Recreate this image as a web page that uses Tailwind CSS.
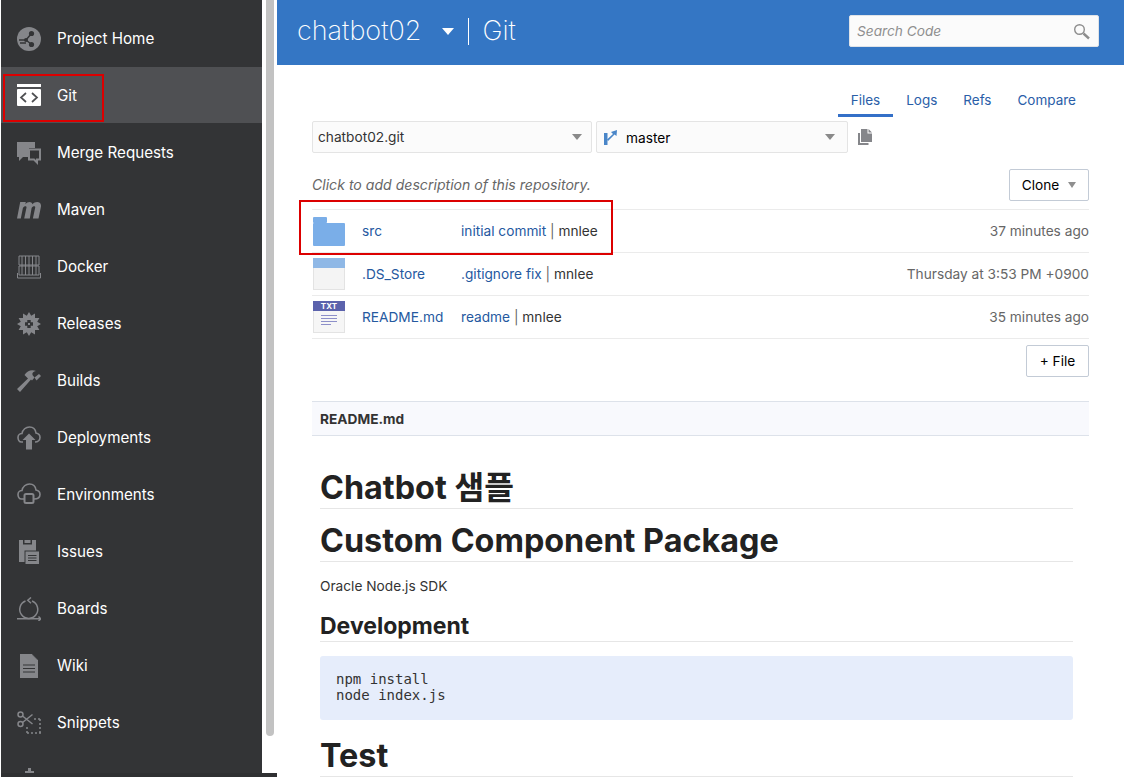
<!DOCTYPE html>
<html lang="en">
<head>
    <meta charset="UTF-8">
    <title>chatbot02 | Git</title>
    <script src="https://cdn.jsdelivr.net/npm/@tailwindcss/browser@4"></script>
</head>
<body class="bg-white">
    <div class="relative w-[1126px] h-[777px] overflow-hidden flex font-['Inter','Noto_Sans_CJK_KR',sans-serif] bg-white">

        <!-- sidebar -->
        <div class="w-[276px] ml-px h-full shrink-0 flex items-start bg-[#2f3032]">
            <div class="w-[261px] h-[773px] bg-[#333436] overflow-hidden text-[15.2px] text-white shrink-0">
                <div class="h-[9px]"></div>
                <a class="flex items-center h-[57px] pl-[16px] pt-[3px]">
                    <svg class="w-6 h-6 mr-4" viewBox="0 0 24 24"><circle cx="12" cy="12" r="12" fill="#85868a"/><path d="M2 13h7l5-6M9 13l5 4M3 16h6" stroke="#333436" stroke-width="1.4" fill="none"/><circle cx="14.500" cy="6.500" r="2.600" fill="#333436"/><circle cx="14.500" cy="17.500" r="2.600" fill="#333436"/><circle cx="9" cy="13" r="2" fill="#333436"/></svg>
                    <span>Project Home</span>
                </a>
                <a class="flex items-center h-[57px] pl-[16px] pt-[2px] bg-[#4f5053] border-t border-[#333436]">
                    <svg class="w-6 h-6 mr-4" viewBox="0 0 24 24"><rect y="0" width="24" height="3" fill="#fff"/><rect y="5" width="24" height="17" rx="1" fill="#fff"/><path d="M9 9l-5 4.500 5 4.500M15 9l5 4.500-5 4.500" stroke="#4f5053" stroke-width="1.700" fill="none"/></svg>
                    <span>Git</span>
                </a>
                <a class="flex items-center h-[57px] pl-[16px] pt-[3px]">
                    <svg class="w-6 h-6 mr-4" viewBox="0 0 24 24"><path d="M0 1h18v6h-6v9H6l-4 4v-4H0z" fill="#85868a"/><path d="M12 8.500h11v10h-3v3l-3-3h-5z" fill="#333436" stroke="#85868a" stroke-width="2"/></svg>
                    <span>Merge Requests</span>
                </a>
                <a class="flex items-center h-[57px] pl-[16px] pt-[3px]">
                    <svg class="w-6 h-6 mr-4" viewBox="0 0 24 24"><path d="M0 20.500L3.200 4h5.600l-.4 2.200C10.500 3.500 14.500 3 15.500 6.200 18 3 24.500 2.800 24 8.500L21.500 20.500h-5.600l2.300-11c.2-2-2.600-1.500-3.600.5L12.800 20.500H7.200l2.300-11c.2-2-2.600-1.500-3.600.5L3.800 20.500z" fill="#85868a"/></svg>
                    <span>Maven</span>
                </a>
                <a class="flex items-center h-[57px] pl-[16px] pt-[3px]">
                    <svg class="w-6 h-6 mr-4" viewBox="0 0 24 24" fill="none" stroke="#85868a" stroke-width="1"><path d="M2 1h20v9H2zM2 11h20v9H2zM.5 18v5h23v-5M12 1v19M5 1v19M8.500 1v19M15.500 1v19M19 1v19"/></svg>
                    <span>Docker</span>
                </a>
                <a class="flex items-center h-[57px] pl-[16px] pt-[3px]">
                    <svg class="w-6 h-6 mr-4" viewBox="0 0 24 24">
                        <polygon fill="#85868a" points="12,0 14.200,3.800 18,1.600 18,6 22.400,6 20.200,9.800 24,12 20.200,14.200 22.400,18 18,18 18,22.400 14.200,20.200 12,24 9.800,20.200 6,22.400 6,18 1.600,18 3.800,14.200 0,12 3.800,9.800 1.600,6 6,6 6,1.600 9.800,3.800"/>
                        <path d="M12 8v8M8 12h8" stroke="#333436" stroke-width="3.400"/>
                        <rect x="11" y="11" width="2" height="2" fill="#85868a"/>
                    </svg>
                    <span>Releases</span>
                </a>
                <a class="flex items-center h-[57px] pl-[16px] pt-[3px]">
                    <svg class="w-6 h-6 mr-4" viewBox="0 0 24 24" fill="#85868a"><path d="M0 20L11 9.500 7.500 6C10 1.500 15 0 19 2c-3 .5-4 2-3.500 4l2 2.500L15 11.500l-1-1L3 23z"/><path d="M17.500 8.500L22 5l2 2-4.500 4.500z"/></svg>
                    <span>Builds</span>
                </a>
                <a class="flex items-center h-[57px] pl-[16px] pt-[3px]">
                    <svg class="w-6 h-6 mr-4" viewBox="0 0 24 24"><path d="M6 16H4.500C2 16 1 13.500 1 11.500 1 9 3 7.500 5 7.500 5.500 3.500 9 1 12.500 1 16 1 18.500 3.500 19 7 21.500 7.500 23 9.500 23 11.500 23 14 21 16 18 16" fill="none" stroke="#85868a" stroke-width="1.600"/><path d="M12 7.500l6.500 6.500H15v9.500H9V14H5.500z" fill="#85868a"/></svg>
                    <span>Deployments</span>
                </a>
                <a class="flex items-center h-[57px] pl-[16px] pt-[3px]">
                    <svg class="w-6 h-6 mr-4" viewBox="0 0 24 24" fill="none" stroke="#85868a" stroke-width="1.600"><path d="M7 16H4.500C2 16 1 13.500 1 11.500 1 9 3 7.500 5 7.500 5.500 3.500 9 1 12.500 1 16 1 18.500 3.500 19 7 21.500 7.500 23 9.500 23 11.500 23 14 21 16 17 16"/><rect x="7.500" y="11" width="9" height="9" rx="1.500" stroke-width="2"/></svg>
                    <span>Environments</span>
                </a>
                <a class="flex items-center h-[57px] pl-[16px] pt-[3px]">
                    <svg class="w-6 h-6 mr-4" viewBox="0 0 24 24"><path d="M2 0h17v10.500H7.500V22H2z" fill="#85868a"/><rect x="6" y="0" width="9" height="4.500" fill="#333436"/><rect x="7.500" y="0" width="6" height="3" fill="#85868a"/><path d="M8.500 11.500H22V24H8.500z" fill="#85868a"/><path d="M11 15.500h8.500M11 18h8.500M11 20.500h8.500" stroke="#333436" stroke-width="1"/></svg>
                    <span>Issues</span>
                </a>
                <a class="flex items-center h-[57px] pl-[16px] pt-[3px]">
                    <svg class="w-6 h-6 mr-4" viewBox="0 0 24 24" fill="none" stroke="#85868a" stroke-width="1.500"><path d="M8.500 4A9 9 0 1 0 15 4"/><path d="M14 .5L10.800 3.300 14 6.200"/><path d="M0 21.800h23.500M21.500 19.500l2.300 2.300-2.300 2.200"/></svg>
                    <span>Boards</span>
                </a>
                <a class="flex items-center h-[57px] pl-[16px] pt-[3px]">
                    <svg class="w-6 h-6 mr-4" viewBox="0 0 24 24"><path d="M3 0h12l6 6v18H3z" fill="#85868a"/><path d="M15 0v6h6" fill="#333436"/><path d="M15 .5v5.500h5.500z" fill="#85868a"/><path d="M6 11h12M6 14.500h12M6 18h12" stroke="#333436" stroke-width="1"/></svg>
                    <span>Wiki</span>
                </a>
                <a class="flex items-center h-[57px] pl-[16px] pt-[3px]">
                    <svg class="w-6 h-6 mr-4" viewBox="0 0 24 24" fill="none" stroke="#85868a" stroke-width="1.500"><circle cx="3.500" cy="3.500" r="2.500"/><circle cx="3.500" cy="13" r="2.500"/><path d="M5.500 5l10 8M5.500 11.500l10-8"/><path d="M17 8h7M23 8v14M10 22h14M10 16v6" stroke-dasharray="2 2"/></svg>
                    <span>Snippets</span>
                </a>
                <a class="flex items-center h-[57px] pl-[16px] pt-[3px]">
                    <svg class="w-6 h-6 mr-4" viewBox="0 0 24 24"><path d="M2 6h6V3h3v-3h3v3h3v3h5v16H2z" fill="#85868a"/></svg>
                    <span>Project Administration</span>
                </a>
            </div>
            <!-- scrollbar -->
            <div class="flex-1 h-[773px] bg-white pl-[4px]">
                <div class="w-[8px] h-[736px] rounded-b-[4px] bg-[#c2c2c2]"></div>
            </div>
        </div>

        <!-- main -->
        <div class="w-[847px] shrink-0 h-full flex flex-col text-[13.7px] text-[#333]">
            <div class="h-[65px] bg-[#3476c4] flex items-center justify-between pl-[20px] pr-[25px] text-white shrink-0">
                <div class="flex items-center font-extralight text-[27px] mb-[2px]">
                    <span>chatbot02</span>
                    <span class="ml-[21px] w-0 h-0 border-x-[6px] border-x-transparent border-t-[7px] border-t-white"></span>
                    <span class="ml-[14px] w-px h-[27px] bg-white"></span>
                    <span class="ml-[13px]">Git</span>
                </div>
                <div class="w-[250px] h-[32px] mb-[3px] bg-[#fbfbfb] rounded-[2px] flex items-center justify-between pl-[7px] pr-[8px] border border-[#dfe3e8]">
                    <span class="italic text-[#8f8f8f]">Search Code</span>
                    <svg class="w-[17px] h-[17px]" viewBox="0 0 17 17" fill="none" stroke="#8d8d8d"><circle cx="6.500" cy="6.500" r="4.800" stroke-width="1.400"/><path d="M10.500 10.500l5.500 5" stroke-width="2.400"/></svg>
                </div>
            </div>

            <div class="pl-[35px] pr-[35px] flex-1 overflow-hidden">
                <!-- tabs -->
                <div class="flex justify-end pt-[25px] h-[52px] text-[#2a5ea8] text-[13.5px]">
                    <a class="h-[27px] px-[13px] border-b-[3px] border-[#3470c8]">Files</a>
                    <a class="h-[27px] px-[13px]">Logs</a>
                    <a class="h-[27px] px-[13px]">Refs</a>
                    <a class="h-[27px] px-[13px]">Compare</a>
                </div>

                <!-- repo and branch pickers -->
                <div class="flex items-center h-[32px] mt-[4px]">
                    <div class="w-[280px] h-[32px] border border-[#e4e4e4] rounded-[2px] bg-[#fbfbfb] flex items-center justify-between pl-[5px] pr-[9px]">
                        <span>chatbot02.git</span>
                        <span class="w-0 h-0 border-x-[5px] border-x-transparent border-t-[6px] border-t-[#8a8a8a]"></span>
                    </div>
                    <div class="ml-[4px] w-[252px] h-[32px] border border-[#e4e4e4] rounded-[2px] bg-[#fbfbfb] flex items-center pl-[7px] pr-[12px]">
                        <svg class="w-[13px] h-[15px] mr-[9px]" viewBox="0 0 13 15" fill="#4a86c8"><path d="M0 3h3.500v12H0z"/><path d="M3 9.500L9 4 7 2l6-2-.5 6-2-1.500L4 11z"/></svg>
                        <span class="text-black flex-1 pt-[2px]">master</span>
                        <span class="w-0 h-0 border-x-[5px] border-x-transparent border-t-[6px] border-t-[#8a8a8a]"></span>
                    </div>
                    <svg class="ml-[10px] w-[14px] h-[16px]" viewBox="0 0 14 16" fill="#85868a"><path d="M3 0h6.500v4.500H14V13H3z"/><path d="M10.500 0v3.500H14z"/><path d="M0 4h2v10h8.500v2H0z"/></svg>
                </div>

                <!-- description -->
                <div class="flex items-center justify-between mt-[16px] h-[32px]">
                    <span class="italic text-[#666] text-[14.1px]">Click to add description of this repository.</span>
                    <button class="h-[32px] w-[80px] border border-[#c3cbd6] rounded-[2px] flex items-center justify-center text-black">
                        Clone
                        <span class="ml-[9px] w-0 h-0 border-x-[4px] border-x-transparent border-t-[6px] border-t-[#8f8f8f]"></span>
                    </button>
                </div>

                <!-- files -->
                <div class="mt-[8px] border-t border-[#ebebeb]">
                    <div class="flex items-center h-[43px] border-b border-[#ebebeb]">
                        <div class="w-[50px] pl-px -mt-[2px]">
                            <svg class="w-[32px] h-[29px] mt-[2px]" viewBox="0 0 32 29"><rect x="0" y="0" width="14" height="6" rx="1" fill="#7aaee8"/><rect x="0" y="6" width="32" height="23" rx="1" fill="#7aaee8"/></svg>
                        </div>
                        <a class="w-[99px] text-[#25599f]">src</a>
                        <span class="text-[#666]"><a class="text-[#25599f]">initial commit</a> | <span class="text-[#333]">mnlee</span></span>
                        <span class="ml-auto text-[#666]">37 minutes ago</span>
                    </div>
                    <div class="flex items-center h-[43px] border-b border-[#ebebeb]">
                        <div class="w-[50px] pl-px -mt-[2px]">
                            <div class="w-[32px] h-[32px] mt-px border border-[#e3e3e3] bg-[#f4f4f4]"><div class="h-[10px] bg-[#8fb8e6] -mx-px -mt-px"></div></div>
                        </div>
                        <a class="w-[99px] text-[#25599f]">.DS_Store</a>
                        <span class="text-[#666]"><a class="text-[#25599f]">.gitignore fix</a> | <span class="text-[#333]">mnlee</span></span>
                        <span class="ml-auto text-[#666]">Thursday at 3:53 PM +0900</span>
                    </div>
                    <div class="flex items-center h-[43px] border-b border-[#ebebeb]">
                        <div class="w-[50px] pl-px -mt-[2px]">
                            <div class="w-[32px] h-[32px] mt-px border border-[#e3e3e3] bg-[#f6f6f6] flex flex-col items-center">
                                <div class="h-[10px] w-[32px] -mt-px bg-[#5b62ac] text-white text-[8px] leading-[10px] font-bold text-center shrink-0">TXT</div>
                                <div class="w-[16px] mt-[4px] flex flex-col gap-[2px]">
                                    <div class="h-px bg-[#8d8fc9]"></div>
                                    <div class="h-px bg-[#8d8fc9]"></div>
                                    <div class="h-px bg-[#8d8fc9]"></div>
                                    <div class="h-px w-[10px] bg-[#8d8fc9]"></div>
                                </div>
                            </div>
                        </div>
                        <a class="w-[99px] text-[#25599f]">README.md</a>
                        <span class="text-[#666]"><a class="text-[#25599f]">readme</a> | <span class="text-[#333]">mnlee</span></span>
                        <span class="ml-auto text-[#666]">35 minutes ago</span>
                    </div>
                </div>

                <div class="flex justify-end mt-[6px]">
                    <button class="h-[32px] w-[63px] border border-[#c3cbd6] rounded-[2px] text-black">+ File</button>
                </div>

                <!-- readme -->
                <div class="mt-[24px] h-[35px] pt-px border-y border-[#dde2ea] bg-[#f8f9fd] flex items-center pl-[8px] font-bold text-[#333]">README.md</div>
                <div class="pl-[8px] pr-[16px] pt-[31px] text-[#222]">
                    <h1 class="text-[32.350px] font-bold leading-[40px] pt-px border-b border-[#e6e6e6]">Chatbot 샘플</h1>
                    <h1 class="mt-[11px] text-[32.350px] font-bold leading-[40px] pt-px border-b border-[#e6e6e6]">Custom Component Package</h1>
                    <p class="mt-[16px] leading-[17px] text-[#333]">Oracle Node.js SDK</p>
                    <h2 class="mt-[17px] text-[23px] font-bold leading-[28px] pb-px border-b border-[#e6e6e6]">Development</h2>
                    <pre class="mt-[14px] h-[64px] bg-[#e6edfb] rounded-[3px] px-[16px] pt-[15px] font-['DejaVu_Sans_Mono',monospace] text-[14px] leading-[16px] text-[#333]">npm install
node index.js</pre>
                    <h1 class="mt-[15px] text-[32.350px] font-bold leading-[40px] pt-px border-b border-[#e6e6e6]">Test</h1>
                </div>
            </div>
        </div>

        <!-- red callouts -->
        <div class="absolute left-[3px] top-[74px] w-[101px] h-[48px] border-2 border-[#dc0000]"></div>
        <div class="absolute left-[299px] top-[200px] w-[314px] h-[55px] border-2 border-[#dc0000]"></div>
    </div>
</body>
</html>
